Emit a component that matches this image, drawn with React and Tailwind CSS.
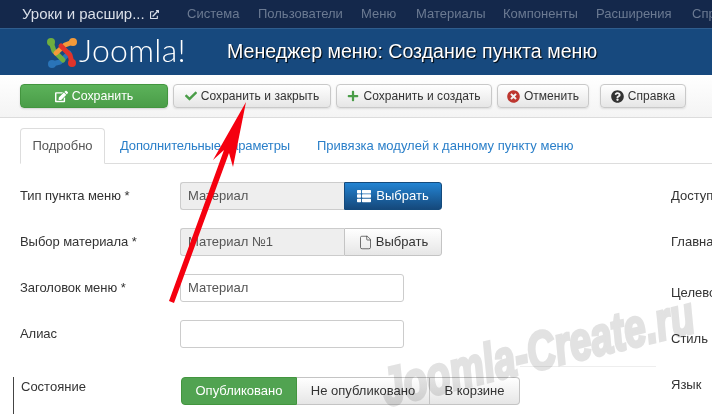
import { FaEdit, FaCheck, FaPlus, FaTimesCircle, FaQuestionCircle, FaThList, FaExternalLinkAlt } from 'react-icons/fa'
import { File } from 'lucide-react'

const font = "[font-family:'Liberation_Sans',Arial,sans-serif]"

function JoomlaMark() {
  return (
    <svg width="31" height="31" viewBox="0 0 31 31" fill="none" strokeLinecap="round" strokeLinejoin="round">
      <path d="M6 27 L14 25 L23 16" stroke="#2a74b8" strokeWidth="5" />
      <path d="M5 5 L8 14 L17 23" stroke="#6fae3f" strokeWidth="5" />
      <path d="M27 5 L19 8 L10 16" stroke="#f39a3a" strokeWidth="5" />
      <path d="M26 26 L24 18 L15 9" stroke="#e0342b" strokeWidth="5" />
      <circle cx="5" cy="5" r="4" fill="#6fae3f" />
      <circle cx="27" cy="5" r="4" fill="#f39a3a" />
      <circle cx="26" cy="26" r="4" fill="#e0342b" />
      <circle cx="6" cy="27" r="4" fill="#2a74b8" />
    </svg>
  )
}

function ToolButton({ icon, children, className }) {
  return (
    <button className={`h-6 flex items-center justify-center gap-1 rounded-[4px] border border-[#c9c9c9] bg-gradient-to-b from-white to-[#e6e6e6] text-[12px] tracking-[0.05px] text-[#333] shadow-[0_1px_2px_rgba(0,0,0,0.1)] ${className}`}>
      {icon}
      {children}
    </button>
  )
}

function Row({ label, className, children }) {
  return (
    <div className={`flex items-center h-7 ${className}`}>
      <div className="w-40 text-[13px] text-[#333] tracking-[-0.05px]">{label}</div>
      {children}
    </div>
  )
}

const inputCls = 'h-7 flex items-center px-[7px] rounded-[3px] border border-[#ccc] text-[13px] text-[#555]'

export default function App() {
  return (
    <div className={`relative w-[712px] h-[415px] overflow-hidden bg-white ${font}`}>
      {/* top nav */}
      <div className="h-7 bg-[#14284b] flex items-center whitespace-nowrap text-[13px] text-[#6b7a92]">
        <div className="flex items-center shrink-0 w-[187px] pl-[22px] gap-[5px] text-[15px] text-[#d9dfe8]">
          Уроки и расшир...
          <FaExternalLinkAlt className="text-[9px]" />
        </div>
        <span className="shrink-0 w-[71px]">Система</span>
        <span className="shrink-0 w-[103px]">Пользователи</span>
        <span className="shrink-0 w-[55px]">Меню</span>
        <span className="shrink-0 w-[87px]">Материалы</span>
        <span className="shrink-0 w-[93px]">Компоненты</span>
        <span className="shrink-0 w-[96px]">Расширения</span>
        <span className="shrink-0">Справка</span>
      </div>

      {/* title bar */}
      <div className="h-[47px] bg-[#17497e] border-t border-[#2f5d8e] flex items-center">
        <div className="w-[227px] shrink-0 pl-[46px] flex items-center gap-[2px]">
          <JoomlaMark />
          <span className="text-[32px] leading-none font-light text-white tracking-[0.3px] [font-family:'Lato_Light',Lato,sans-serif] pb-1">Joomla!</span>
        </div>
        <h1 className="text-[19.6px] text-white whitespace-nowrap [text-shadow:1px_1px_1px_#000]">Менеджер меню: Создание пункта меню</h1>
      </div>

      {/* toolbar */}
      <div className="h-[43px] bg-gradient-to-b from-white to-[#f4f4f4] border-b border-[#dcdcdc] flex items-center pl-5 gap-[5px]">
        <button className="w-[148px] h-6 flex items-center justify-center gap-1 rounded-[4px] border border-[#43953f] bg-gradient-to-b from-[#5cb25a] to-[#4a9d48] text-[12.4px] text-white shadow-[0_1px_2px_rgba(0,0,0,0.15)]">
          <FaEdit className="text-[13px]" />
          Сохранить
        </button>
        <ToolButton className="w-[158px]" icon={<FaCheck className="text-[12px] text-[#4a9d48]" />}>Сохранить и закрыть</ToolButton>
        <ToolButton className="w-[156px]" icon={<FaPlus className="text-[12px] text-[#4a9d48]" />}>Сохранить и создать</ToolButton>
        <ToolButton className="w-[92px]" icon={<FaTimesCircle className="text-[13px] text-[#bd362f]" />}>Отменить</ToolButton>
        <ToolButton className="w-[86px] ml-[6px]" icon={<FaQuestionCircle className="text-[13px] text-[#333]" />}>Справка</ToolButton>
      </div>

      {/* tabs */}
      <div className="mt-[10px] ml-5 h-9 border-b border-[#ddd] flex text-[13px] text-[#2a7fc9] whitespace-nowrap">
        <div className="w-[85px] h-9 flex items-center justify-center rounded-t-[4px] border border-b-white border-[#ddd] bg-white text-[#555]">Подробно</div>
        <span className="ml-[15px] h-9 flex items-center w-[197px] tracking-[-0.15px]">Дополнительные параметры</span>
        <span className="h-9 flex items-center">Привязка модулей к данному пункту меню</span>
      </div>

      {/* form */}
      <div className="flex pl-5 pt-[18px]">
        <div className="w-[651px] shrink-0 flex flex-col">
          <Row label="Тип пункта меню *">
            <div className={`${inputCls} w-[164px] bg-[#eee] rounded-r-none border-r-0`}>Материал</div>
            <button className="w-[98px] h-7 flex items-center justify-center gap-[5px] rounded-r-[3px] border border-[#144a7c] bg-gradient-to-b from-[#2384d3] to-[#15497c] text-[13px] text-white">
              <FaThList className="text-[14px]" />
              Выбрать
            </button>
          </Row>
          <Row label="Выбор материала *" className="mt-[18px]">
            <div className={`${inputCls} w-[164px] bg-[#eee] rounded-r-none border-r-0`}>Материал №1</div>
            <button className="w-[98px] h-7 flex items-center justify-center gap-[3px] rounded-r-[3px] border border-[#c4c4c4] bg-gradient-to-b from-white to-[#e6e6e6] text-[13px] text-[#333]">
              <File size={15} strokeWidth={1.1} />
              Выбрать
            </button>
          </Row>
          <Row label="Заголовок меню *" className="mt-[18px]">
            <div className={`${inputCls} w-[224px] bg-white`}>Материал</div>
          </Row>
          <Row label="Алиас" className="mt-[18px]">
            <div className={`${inputCls} w-[224px] bg-white`} />
          </Row>
          <div className="mt-[18px] ml-[500px] mr-[15px] h-px bg-[#eee]" />
          <div className="relative mt-[10px] flex h-7">
            <div className="absolute left-[-7px] top-0 w-px h-[37px] bg-[#444]" />
            <div className="w-[161px] pl-px text-[13px] text-[#333]">Состояние</div>
            <div className="flex h-7 text-[13px] text-[#333]">
              <div className="w-[116px] flex items-center justify-center rounded-l-[4px] border border-[#43953f] bg-[#51a351] text-white">Опубликовано</div>
              <div className="w-[133px] flex items-center justify-center border border-l-0 border-[#c4c4c4] bg-gradient-to-b from-white to-[#e6e6e6]">Не опубликовано</div>
              <div className="w-[90px] flex items-center justify-center rounded-r-[4px] border border-l-0 border-[#c4c4c4] bg-gradient-to-b from-white to-[#e6e6e6]">В корзине</div>
            </div>
          </div>
        </div>
        <div className="text-[13px] text-[#333] whitespace-nowrap flex flex-col">
          <div className="mt-[4px] h-4">Доступ</div>
          <div className="mt-[30px] h-4">Главная</div>
          <div className="mt-[35px] h-4">Целевое</div>
          <div className="mt-[30px] h-4">Стиль шаблона</div>
          <div className="mt-[30px] h-4">Язык</div>
        </div>
      </div>

      {/* watermark */}
      <div className="absolute left-[382px] top-[361px] origin-left -rotate-[13.5deg] scale-x-[0.72] text-[54px] leading-none font-bold italic whitespace-nowrap text-[#e2e2e2] mix-blend-multiply [-webkit-text-stroke:3px_#e2e2e2] pointer-events-none">
        Joomla-Create.ru
      </div>

      {/* red arrow */}
      <svg className="absolute left-0 top-0 pointer-events-none" width="712" height="415">
        <polygon points="246,102 233,167 229,153 174,303 169,301 224,150 213,160" fill="#f5000f" />
      </svg>
    </div>
  )
}
